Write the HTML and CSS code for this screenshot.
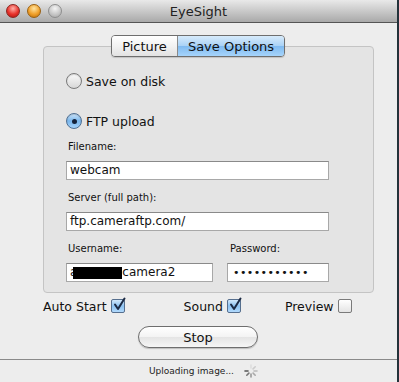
FILE: index.html
```html
<!doctype html>
<html lang="en">
	<head>
		<meta charset="UTF-8" />
		<meta name="viewport" content="width=device-width, initial-scale=1.0" />
		<title>EyeSight</title>
		<link rel="stylesheet" href="styles.css">
	</head>
	<body>
		<div class="desk">
			<div class="window">
				<div class="titlebar">
					<div class="lights">
						<span class="light red"></span>
						<span class="light orange"></span>
						<span class="light gray"></span>
					</div>
					<div class="title">EyeSight</div>
				</div>

				<div class="content">
					<div class="tabs">
						<span class="tab">Picture</span>
						<span class="tab selected">Save Options</span>
					</div>

					<div class="groupbox">
						<label class="radio-row first">
							<span class="radio"></span>
							<span>Save on disk</span>
						</label>
						<label class="radio-row second">
							<span class="radio on"><span class="dot"></span></span>
							<span>FTP upload</span>
						</label>

						<div class="field-label">Filename:</div>
						<div class="input wide">webcam</div>

						<div class="field-label">Server (full path):</div>
						<div class="input wide">ftp.cameraftp.com/</div>

						<div class="pair">
							<div class="col user">
								<div class="field-label">Username:</div>
								<div class="input">a<span class="redact"></span>camera2</div>
							</div>
							<div class="col pass">
								<div class="field-label">Password:</div>
								<div class="input dots">•••••••••••</div>
							</div>
						</div>
					</div>

					<div class="checks">
						<label class="check-item auto">Auto Start <span class="box on">
							<svg width="14" height="14" viewBox="0 0 14 14"><path d="M3 6.5 L6 11 L12.5 0.5" fill="none" stroke="#1c2a44" stroke-width="2" stroke-linecap="round" stroke-linejoin="round"/></svg>
						</span></label>
						<label class="check-item sound">Sound <span class="box on">
							<svg width="14" height="14" viewBox="0 0 14 14"><path d="M3 6.5 L6 11 L12.5 0.5" fill="none" stroke="#1c2a44" stroke-width="2" stroke-linecap="round" stroke-linejoin="round"/></svg>
						</span></label>
						<label class="check-item preview">Preview <span class="box"></span></label>
					</div>

					<div class="button-row">
						<button class="stop">Stop</button>
					</div>
				</div>

				<div class="statusbar">
					<span>Uploading image...</span>
					<svg class="spinner" width="14" height="14" viewBox="0 0 14 14">
						<g stroke-width="1.6" stroke-linecap="round">
							<line x1="7" y1="1" x2="7" y2="4" stroke="#ddd"/>
							<line x1="11.2" y1="2.8" x2="9.1" y2="4.9" stroke="#ccc"/>
							<line x1="13" y1="7" x2="10" y2="7" stroke="#bbb"/>
							<line x1="11.2" y1="11.2" x2="9.1" y2="9.1" stroke="#aaa"/>
							<line x1="7" y1="13" x2="7" y2="10" stroke="#999"/>
							<line x1="2.8" y1="11.2" x2="4.9" y2="9.1" stroke="#777"/>
							<line x1="1" y1="7" x2="4" y2="7" stroke="#555"/>
							<line x1="2.8" y1="2.8" x2="4.9" y2="4.9" stroke="#eee"/>
						</g>
					</svg>
				</div>
			</div>
		</div>
	</body>
</html>
```

FILE: styles.css
```css
body { margin: 0; font-family: "DejaVu Sans", "Liberation Sans", sans-serif; }
.desk { width: 399px; height: 382px; background: #23323a; display: flex; }
.window { width: 397px; height: 382px; background: #ededed; display: flex; flex-direction: column; }

.titlebar { height: 22px; border-bottom: 1px solid #555; background: linear-gradient(#e9e9e9, #c9c9c9 50%, #a9a9a9); display: flex; align-items: center; position: relative; }
.lights { display: flex; gap: 7px; padding-left: 6px; }
.light { width: 14px; height: 14px; border-radius: 50%; box-sizing: border-box; }
.light.red { background: radial-gradient(circle at 50% 30%, #ffb0a8, #e8322b 55%, #a8120c); border: 1px solid #8a2420; }
.light.orange { background: radial-gradient(circle at 50% 30%, #ffe4a0, #f0a02a 55%, #b86a08); border: 1px solid #9a6010; }
.light.gray { background: radial-gradient(circle at 50% 30%, #f4f4f4, #c4c4c4 60%, #a4a4a4); border: 1px solid #8e8e8e; }
.title { position: absolute; left: 0; right: 0; text-align: center; font-size: 13px; color: #222; pointer-events: none; }

.content { flex: 1; padding-left: 43px; }
.tabs { position: relative; z-index: 1; margin: 12px 0 0 68px; display: flex; width: 172px; height: 20px; border: 1px solid #6e6e6e; border-radius: 4px; overflow: hidden; box-shadow: 0 1px 1px rgba(0,0,0,0.15); }
.tab { display: flex; align-items: center; justify-content: center; font-size: 13px; color: #111; background: linear-gradient(#ffffff, #f2f2f2 50%, #e2e2e2); }
.tab:first-child { width: 65px; border-right: 1px solid #8a8a8a; }
.tab.selected { flex: 1; background: linear-gradient(#d7ebfb, #a9d2f6 50%, #7fbaf0 51%, #a6d4fb); }

.groupbox { margin-top: -11px; width: 307px; height: 245px; background: #e4e4e4; border: 1px solid #c4c4c4; border-radius: 4px; padding-left: 22px; font-size: 10px; color: #111; }
.radio-row { display: flex; align-items: center; gap: 4px; font-size: 12.5px; height: 16px; }
.radio-row.first { margin-top: 26px; }
.radio-row.second { margin-top: 24px; }
.radio { width: 14px; height: 14px; border-radius: 50%; border: 1px solid #7a7a7a; background: linear-gradient(#fafafa, #d8d8d8); display: flex; align-items: center; justify-content: center; box-shadow: inset 0 1px 1px rgba(0,0,0,0.15); }
.radio.on { background: linear-gradient(#cfe6fa, #79b6ec 50%, #a4d2fb); border-color: #4f6f92; }
.dot { width: 5px; height: 5px; border-radius: 50%; background: #14223a; }

.field-label { margin: 12px 0 0 2px; height: 11px; line-height: 11px; }
.input { margin-top: 9px; height: 19px; box-sizing: border-box; background: #fff; border: 1px solid #a8a8a8; border-top-color: #8a8a8a; padding-left: 3px; font-size: 12px; line-height: 17px; color: #111; display: flex; align-items: center; }
.input.wide { width: 263px; }
.pair { display: flex; gap: 14px; }
.col.user { width: 147px; }
.col.pass { width: 102px; }
.col.pass .field-label { margin-left: 3px; }
.redact { display: inline-block; width: 49px; height: 12px; background: #000; margin-left: -4px; }
.dots { font-size: 11px; letter-spacing: 0.4px; padding-left: 5px; }

.checks { display: flex; align-items: center; height: 16px; margin-top: 5px; font-size: 12.5px; color: #111; }
.check-item { display: flex; align-items: center; gap: 4px; }
.check-item.sound { margin-left: 59px; }
.check-item.preview { margin-left: 44px; }
.box { width: 14px; height: 14px; box-sizing: border-box; border: 1px solid #7a7a7a; border-radius: 2px; background: linear-gradient(#ffffff, #e4e4e4); display: flex; }
.box.on { background: linear-gradient(#d3e9fb, #8cc2f1 50%, #b1d9fc); border-color: #566f8e; }
.box svg { margin-top: -2px; overflow: visible; }

.button-row { display: flex; margin-top: 12px; padding-left: 95px; }
.stop { width: 120px; height: 22px; border-radius: 11px; border: 1px solid #6e6e6e; background: linear-gradient(#ffffff, #f3f3f3 50%, #e4e4e4 51%, #f6f6f6); font-family: inherit; font-size: 13px; color: #111; padding: 0; box-shadow: 0 1px 1px rgba(0,0,0,0.2); }

.statusbar { height: 22px; border-top: 1px solid #8a8a8a; display: flex; align-items: center; justify-content: center; gap: 10px; font-size: 9px; color: #222; padding-left: 10px; }
.spinner { display: block; }
```
